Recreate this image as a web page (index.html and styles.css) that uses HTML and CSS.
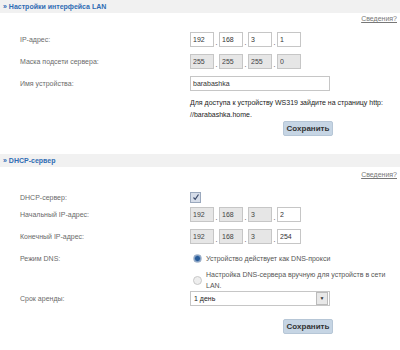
FILE: index.html
```html
<!DOCTYPE html>
<html lang="ru">
<head>
    <meta charset="UTF-8">
    <title>Настройки LAN</title>
    <link rel="stylesheet" href="styles.css">
</head>
<body>
    <section class="panel">
        <h2 class="panel-title">» Настройки интерфейса LAN</h2>
        <div class="help"><a href="#">Сведения?</a></div>

        <div class="row">
            <label>IP-адрес:</label>
            <div class="ip">
                <input type="text" value="192"><span class="dot">.</span>
                <input type="text" value="168"><span class="dot">.</span>
                <input type="text" value="3"><span class="dot">.</span>
                <input type="text" value="1">
            </div>
        </div>
        <div class="row">
            <label>Маска подсети сервера:</label>
            <div class="ip">
                <input type="text" value="255" disabled><span class="dot">.</span>
                <input type="text" value="255" disabled><span class="dot">.</span>
                <input type="text" value="255" disabled><span class="dot">.</span>
                <input type="text" value="0" disabled>
            </div>
        </div>
        <div class="row">
            <label>Имя устройства:</label>
            <input class="text-input" type="text" value="barabashka">
        </div>
        <p class="note">Для доступа к устройству WS319 зайдите на страницу http: //barabashka.home.</p>
        <div class="actions"><button class="save">Сохранить</button></div>
    </section>

    <section class="panel">
        <h2 class="panel-title">» DHCP-сервер</h2>
        <div class="help dhcp-help"><a href="#">Сведения?</a></div>

        <div class="row short">
            <label>DHCP-сервер:</label>
            <span class="checkbox">
                <svg width="8" height="8" viewBox="0 0 8 8"><path d="M1.5 4.5 L3.2 6.3 L6.5 1.5" fill="none" stroke="#3a4a6a" stroke-width="1.2"/></svg>
            </span>
        </div>
        <div class="row">
            <label>Начальный IP-адрес:</label>
            <div class="ip">
                <input type="text" value="192" disabled><span class="dot">.</span>
                <input type="text" value="168" disabled><span class="dot">.</span>
                <input type="text" value="3" disabled><span class="dot">.</span>
                <input type="text" value="2">
            </div>
        </div>
        <div class="row">
            <label>Конечный IP-адрес:</label>
            <div class="ip">
                <input type="text" value="192" disabled><span class="dot">.</span>
                <input type="text" value="168" disabled><span class="dot">.</span>
                <input type="text" value="3" disabled><span class="dot">.</span>
                <input type="text" value="254">
            </div>
        </div>
        <div class="row">
            <label>Режим DNS:</label>
            <div class="option"><span class="radio checked"></span><span>Устройство действует как DNS-прокси</span></div>
        </div>
        <div class="row">
            <span></span>
            <div class="option"><span class="radio"></span><span>Настройка DNS-сервера вручную для устройств в сети LAN.</span></div>
        </div>
        <div class="row compact">
            <label>Срок аренды:</label>
            <div class="select">
                <span class="select-value">1 день</span>
                <span class="select-arrow">▼</span>
            </div>
        </div>
        <div class="actions dhcp-actions"><button class="save">Сохранить</button></div>
    </section>
</body>
</html>
```

FILE: styles.css
```css
:root {
    --title-bg: #f1f1f1;
    --title-color: #2f6cb4;
    --label-color: #6a6a6a;
    --border: #c6c6c6;
    --disabled-bg: #e6e6e6;
    --button-bg: #c6d5e4;
}
body {
    margin: 0;
    font-family: 'Liberation Sans', Arial, sans-serif;
    font-size: 7px;
    color: #333;
    background: #fff;
}
.panel {
    padding-bottom: 18px;
}
.panel-title {
    margin: 0;
    height: 13px;
    line-height: 13px;
    padding-left: 3px;
    background: var(--title-bg);
    color: var(--title-color);
    font-size: 7px;
    font-weight: bold;
}
.help {
    text-align: right;
    padding-right: 3px;
    margin-top: 1px;
    margin-bottom: 4px;
    line-height: 10px;
}
.dhcp-help {
    margin-top: 3px;
    margin-bottom: 11px;
}
.help a {
    color: #777;
}
.row {
    display: grid;
    grid-template-columns: 170px 1fr;
    align-items: center;
    padding-left: 20px;
    min-height: 22px;
}
.row.short {
    min-height: 12px;
}
.row.compact {
    min-height: 15px;
}
.row label {
    color: var(--label-color);
}
.ip {
    display: flex;
    align-items: flex-end;
}
.ip input,
.text-input {
    box-sizing: border-box;
    height: 15px;
    width: 24px;
    margin: 0;
    padding: 0 2px;
    border: 1px solid var(--border);
    font-family: inherit;
    font-size: 7px;
    color: #333;
    background: #fff;
}
.ip input:disabled {
    background: var(--disabled-bg);
    color: #444;
}
.ip .dot {
    width: 5px;
    text-align: center;
    line-height: 8px;
}
.text-input {
    width: 140px;
}
.note {
    margin: 0;
    padding: 3px 10px 0 190px;
    line-height: 12px;
    color: #222;
}
.actions {
    padding-left: 283px;
}
.dhcp-actions {
    margin-top: 13px;
}
.save {
    height: 15px;
    width: 50px;
    padding: 0;
    border: 1px solid #b6c6d6;
    border-radius: 2px;
    background: var(--button-bg);
    font-family: inherit;
    font-size: 8px;
    font-weight: bold;
    color: #333;
}
.checkbox {
    width: 9px;
    height: 9px;
    border: 1px solid #9aa8bd;
    background: #d6dde9;
    display: flex;
    align-items: center;
    justify-content: center;
}
.option {
    display: flex;
    align-items: center;
    gap: 4px;
    padding-left: 3px;
    line-height: 11px;
    color: #555;
    max-width: 195px;
}
.radio {
    flex: none;
    width: 7px;
    height: 7px;
    border-radius: 50%;
    border: 1px solid #c8c8c8;
    background: #eee;
}
.radio.checked {
    border-color: #a8b8cc;
    background: radial-gradient(circle, #2a5d9a 0 2px, #7d9cc4 3px);
}
.select {
    box-sizing: border-box;
    width: 140px;
    height: 15px;
    border: 1px solid var(--border);
    display: flex;
    align-items: center;
    background: #fff;
}
.select-value {
    flex: 1;
    padding-left: 3px;
    color: #222;
}
.select-arrow {
    width: 10px;
    height: 11px;
    margin-right: 1px;
    border: 1px solid #bbb;
    background: #e8e8e8;
    font-size: 5px;
    line-height: 11px;
    text-align: center;
    color: #333;
}
```
